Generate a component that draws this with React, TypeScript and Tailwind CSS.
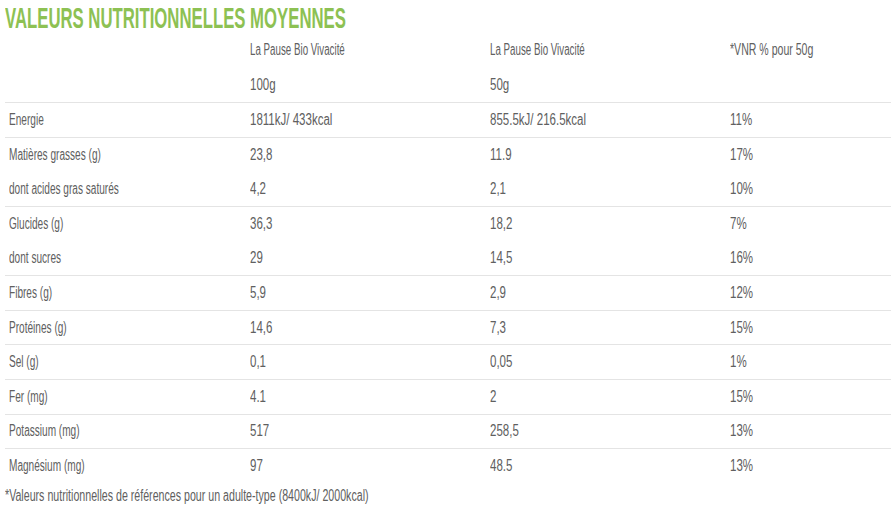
const rows = [
  { name: 'Energie', a: '1811kJ/ 433kcal', b: '855.5kJ/ 216.5kcal', c: '11%', line: true },
  { name: 'Matières grasses (g)', a: '23,8', b: '11.9', c: '17%', line: true },
  { name: 'dont acides gras saturés', a: '4,2', b: '2,1', c: '10%', line: false },
  { name: 'Glucides (g)', a: '36,3', b: '18,2', c: '7%', line: true },
  { name: 'dont sucres', a: '29', b: '14,5', c: '16%', line: false },
  { name: 'Fibres (g)', a: '5,9', b: '2,9', c: '12%', line: true },
  { name: 'Protéines (g)', a: '14,6', b: '7,3', c: '15%', line: true },
  { name: 'Sel (g)', a: '0,1', b: '0,05', c: '1%', line: true },
  { name: 'Fer (mg)', a: '4.1', b: '2', c: '15%', line: true },
  { name: 'Potassium (mg)', a: '517', b: '258,5', c: '13%', line: true },
  { name: 'Magnésium (mg)', a: '97', b: '48.5', c: '13%', line: true },
]

const TEXT = 'scale-x-[0.63]'
const NUM = 'scale-x-[0.72]'

// condensed look: squeeze the text horizontally
function T({ children, s }: { children: React.ReactNode; s: string }) {
  return <span className={`inline-block origin-left whitespace-nowrap ${s}`}>{children}</span>
}

function Row({ cells, scales, line }: { cells: string[]; scales: string[]; line?: boolean }) {
  return (
    <div
      className={`grid grid-cols-[241px_240px_240px_1fr] h-[34.6px] items-center ${
        line ? 'border-t border-[#e4e4e4]' : ''
      }`}
    >
      {cells.map((c, i) => (
        <div key={i} className="pl-1">
          <T s={scales[i]}>{c}</T>
        </div>
      ))}
    </div>
  )
}

export default function App() {
  return (
    <div
      className="w-[891px] h-[521px] bg-white overflow-hidden text-[16px] text-[#606060]"
      style={{ fontFamily: '"Liberation Sans", Arial, sans-serif' }}
    >
      {/* Title */}
      <div className="h-[33px] pl-[5px] flex items-center">
        <h2 className="inline-block origin-left scale-x-[0.577] whitespace-nowrap text-[29px] font-bold leading-none text-[#8dc153] pt-1">
          VALEURS NUTRITIONNELLES MOYENNES
        </h2>
      </div>

      <div className="pl-[5px]">
        <Row
          cells={['', 'La Pause Bio Vivacité', 'La Pause Bio Vivacité', '*VNR % pour 50g']}
          scales={[TEXT, 'scale-x-[0.61]', 'scale-x-[0.61]', 'scale-x-[0.66]']}
        />
        <Row cells={['', '100g', '50g', '']} scales={[TEXT, NUM, NUM, NUM]} />
        {rows.map((r) => (
          <Row key={r.name} cells={[r.name, r.a, r.b, r.c]} scales={[TEXT, NUM, NUM, NUM]} line={r.line} />
        ))}
        <div className="h-[27px] flex items-center">
          <T s="scale-x-[0.665]">*Valeurs nutritionnelles de références pour un adulte-type (8400kJ/ 2000kcal)</T>
        </div>
      </div>
    </div>
  )
}
